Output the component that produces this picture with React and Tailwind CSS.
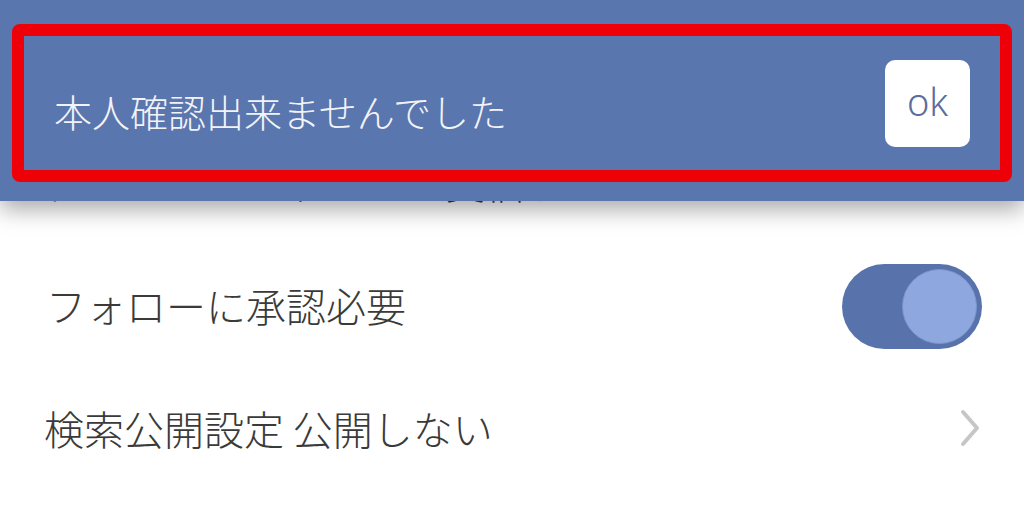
import React from "react";

export default function App() {
  const jp = { fontFamily: '"Noto Sans CJK JP", "Noto Sans", sans-serif' };
  return (
    <div className="relative w-[1024px] h-[505px] overflow-hidden bg-white" style={jp}>
      {/* settings list underneath */}
      <div className="flex flex-col pt-[120px]">
        <div className="flex items-center h-[124px] pl-[46px] pr-[44px] text-[40px] font-light text-[#3a3a3a] leading-none">
          <span>ダイレクトメッセージ受信する</span>
        </div>
        <div className="flex items-center justify-between h-[121px] pl-[46px] pr-[42px] text-[40px] font-light text-[#3a3a3a] leading-none">
          <span>フォローに承認必要</span>
          <div className="relative w-[140px] h-[85px] rounded-full bg-[#5872ab] mt-[4px]">
            <div className="absolute right-[5px] top-[5px] w-[75px] h-[75px] rounded-full bg-[#8ea8df] border border-[#7d95cc]" />
          </div>
        </div>
        <div className="flex items-center justify-between h-[126px] pl-[44px] pr-[44px] text-[40px] font-light text-[#3a3a3a] leading-none">
          <span>検索公開設定 公開しない</span>
          <svg width="24" height="38" viewBox="0 0 24 38" className="-mr-[2px]">
            <path d="M5 3 L19 19 L5 35" fill="none" stroke="#c6c6c6" strokeWidth="4" strokeLinecap="round" strokeLinejoin="round" />
          </svg>
        </div>
      </div>

      {/* snackbar overlay */}
      <div className="absolute left-0 top-0 w-full h-[201px] bg-[#5a76ae] shadow-[0_8px_22px_rgba(0,0,0,0.35)] pt-[24px] px-[12px]">
        <div className="h-[158px] border-[12px] border-[#ee0008] rounded-[8px] flex items-center justify-between pl-[30px] pr-[30px]">
          <span className="text-[38px] leading-none font-light text-[#f2f3f7] pt-[16px]">本人確認出来ませんでした</span>
          <div className="w-[85px] h-[87px] rounded-[10px] bg-white flex items-center justify-center">
            <span className="text-[38px] leading-none font-light text-[#5a6d9e] pb-[4px]" style={{ fontFamily: '"Noto Sans", sans-serif' }}>ok</span>
          </div>
        </div>
      </div>
    </div>
  );
}
